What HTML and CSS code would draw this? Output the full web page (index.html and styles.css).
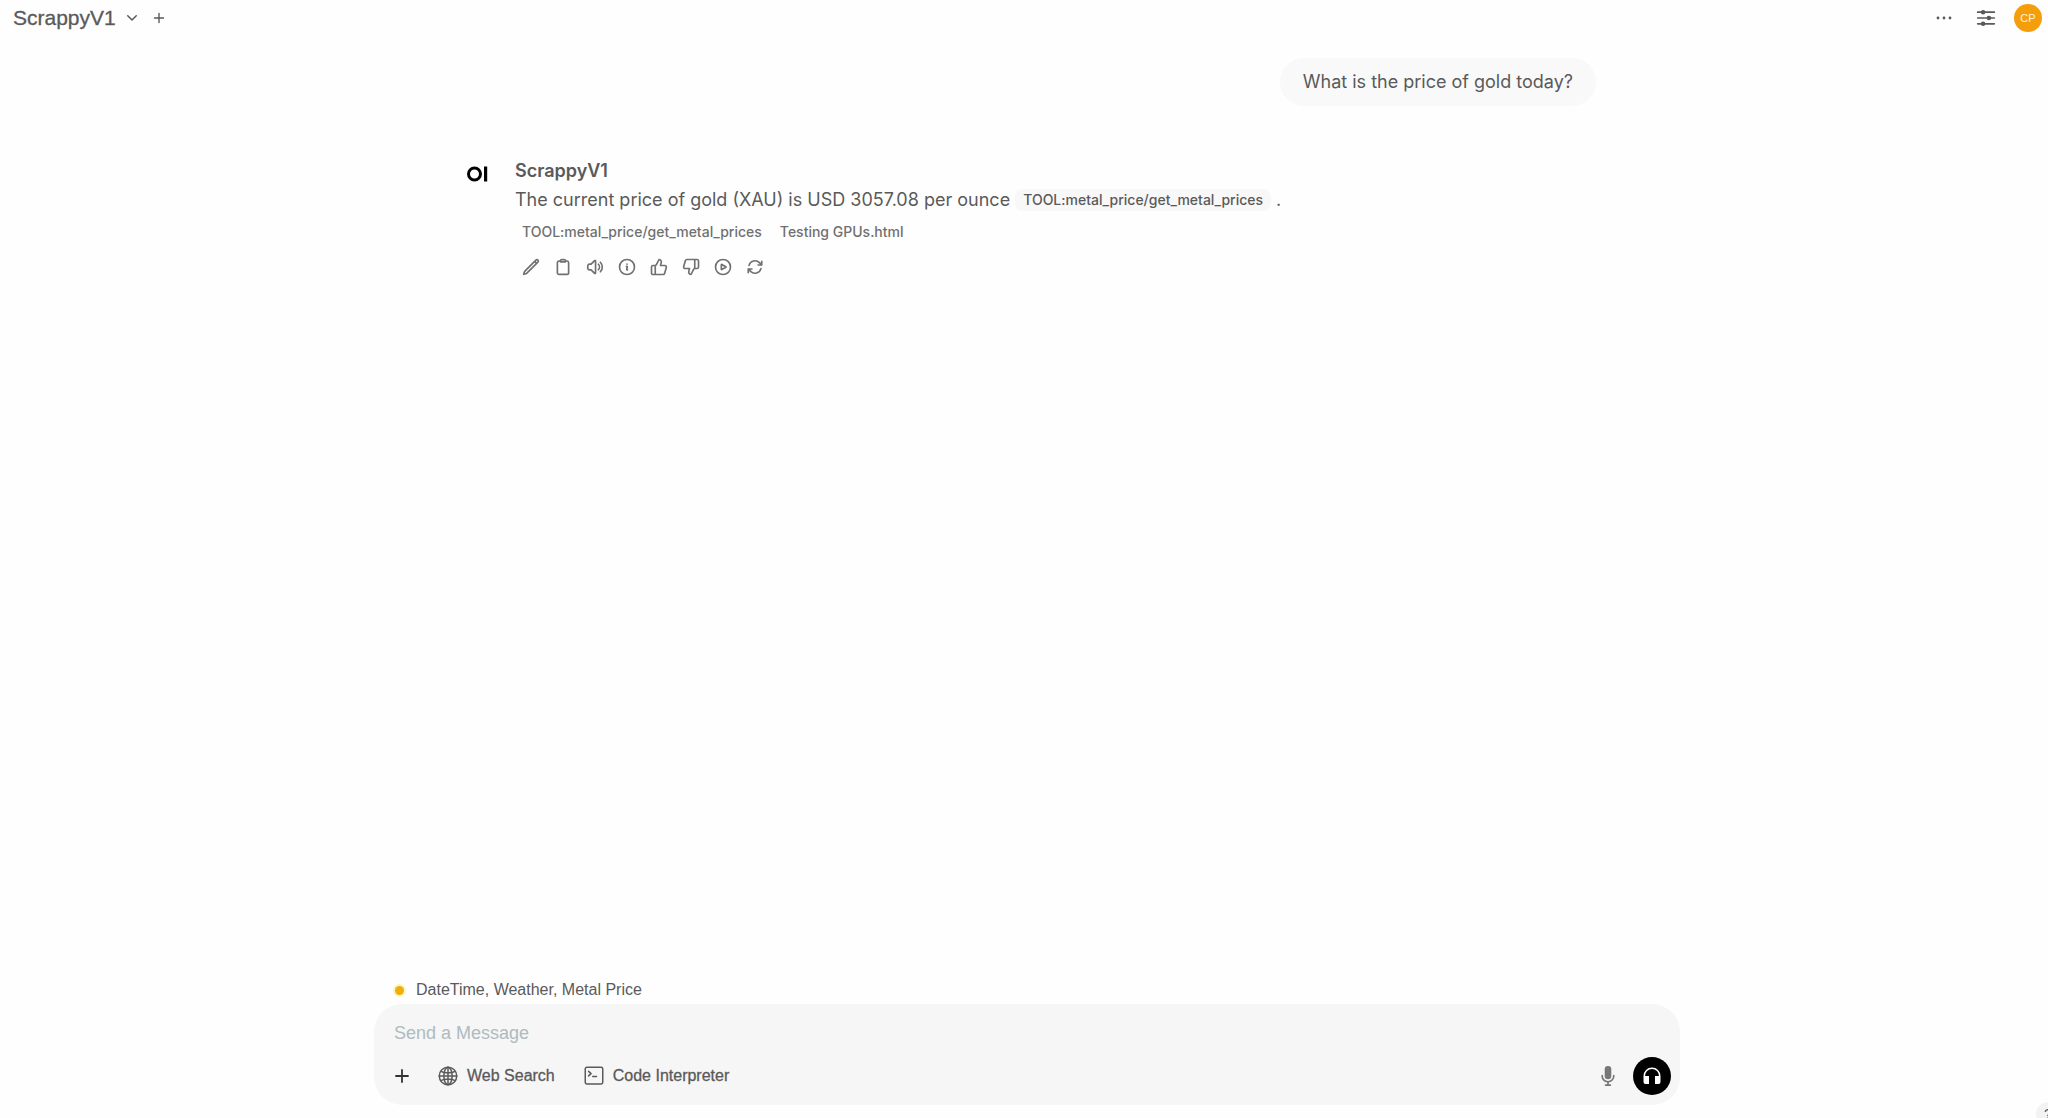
FILE: index.html
```html
<!DOCTYPE html>
<html lang="en">
<head>
    <meta charset="UTF-8">
    <meta name="viewport" content="width=device-width, initial-scale=1.0">
    <title>ScrappyV1</title>
    <link rel="stylesheet" href="styles.css">
</head>
<body>
    <header class="navbar">
        <button class="model-select" type="button">
            ScrappyV1
            <svg class="icon-xs" viewBox="0 0 24 24" stroke-width="3"><path d="m20.500 7.500-8.500 8.500-8.500-8.500"/></svg>
        </button>
        <button class="icon-btn" type="button" aria-label="Add model">
            <svg class="icon-xs" viewBox="0 0 24 24" stroke-width="2.8"><path d="M12 3v18M3 12h18"/></svg>
        </button>
        <div class="navbar-right">
            <button class="icon-btn more-btn" type="button" aria-label="More">
                <svg class="icon-md dots" viewBox="0 0 20 20"><circle cx="4" cy="10" r="1.4"/><circle cx="10" cy="10" r="1.4"/><circle cx="16" cy="10" r="1.4"/></svg>
            </button>
            <button class="icon-btn" type="button" aria-label="Controls">
                <svg class="icon-md" viewBox="0 0 24 24" stroke-width="2"><path d="M2 5h4.500M10.500 5H22M2 12h11.500M17.500 12H22M2 19h4.500M10.500 19H22"/><g fill="currentColor"><circle cx="8.500" cy="5" r="1.700"/><circle cx="15.500" cy="12" r="1.700"/><circle cx="8.500" cy="19" r="1.700"/></g></svg>
            </button>
            <button class="user-avatar" type="button">CP</button>
        </div>
    </header>

    <main class="chat">
        <div class="messages">
            <div class="user-message">What is the price of gold today?</div>

            <article class="reply">
                <div class="reply-avatar">
                    <svg viewBox="0 0 22 18"><circle cx="7.500" cy="9" r="6" fill="none" stroke="#000" stroke-width="3"/><path d="M17 1.500h3.200v15H17z"/></svg>
                </div>
                <div class="reply-body">
                    <h2>ScrappyV1</h2>
                    <p>The current price of gold (XAU) is USD 3057.08 per ounce <button class="source" type="button">TOOL:metal_price/get_metal_prices</button> .</p>
                    <div class="citations">
                        <button type="button">TOOL:metal_price/get_metal_prices</button>
                        <button type="button">Testing GPUs.html</button>
                    </div>
                    <div class="actions">
                        <button type="button" aria-label="Edit">
                            <svg viewBox="0 0 24 24"><path d="m16.862 4.487 1.687-1.688a1.875 1.875 0 1 1 2.652 2.652L6.832 19.82a4.5 4.5 0 0 1-1.897 1.13l-2.685.8.8-2.685a4.5 4.5 0 0 1 1.13-1.897L16.863 4.487Zm0 0L19.5 7.125"/></svg>
                        </button>
                        <button type="button" aria-label="Copy">
                            <svg viewBox="0 0 24 24"><path d="M15.666 3.888A2.25 2.25 0 0 0 13.5 2.25h-3c-1.03 0-1.9.693-2.166 1.638m7.332 0c.055.194.084.4.084.612a.75.75 0 0 1-.75.75H9a.75.75 0 0 1-.75-.75c0-.212.03-.418.084-.612m7.332 0c.646.049 1.288.11 1.927.184 1.1.128 1.907 1.077 1.907 2.185V19.5a2.25 2.25 0 0 1-2.25 2.25H6.75A2.25 2.25 0 0 1 4.5 19.5V6.257c0-1.108.806-2.057 1.907-2.185a48.208 48.208 0 0 1 1.927-.184"/></svg>
                        </button>
                        <button type="button" aria-label="Read aloud">
                            <svg viewBox="0 0 24 24"><path d="M19.114 5.636a9 9 0 0 1 0 12.728M16.463 8.288a5.25 5.25 0 0 1 0 7.424M6.75 8.25l4.72-4.72a.75.75 0 0 1 1.28.53v15.88a.75.75 0 0 1-1.28.53l-4.72-4.72H4.51c-.88 0-1.704-.507-1.938-1.354A9.009 9.009 0 0 1 2.25 12c0-.83.112-1.633.322-2.396C2.806 8.756 3.63 8.25 4.51 8.25H6.75Z"/></svg>
                        </button>
                        <button type="button" aria-label="Info">
                            <svg viewBox="0 0 24 24"><path d="m11.25 11.25.041-.02a.75.75 0 0 1 1.063.852l-.708 2.836a.75.75 0 0 0 1.063.853l.041-.021M22 12a10 10 0 1 1-20 0 10 10 0 0 1 20 0Zm-10-3.75h.008v.008H12V8.25Z"/></svg>
                        </button>
                        <button type="button" aria-label="Good response">
                            <svg viewBox="0 0 24 24"><path d="M7 10v12M15 5.88 14 10h5.83a2 2 0 0 1 1.92 2.56l-2.33 8A2 2 0 0 1 17.5 22H4a2 2 0 0 1-2-2v-8a2 2 0 0 1 2-2h2.76a2 2 0 0 0 1.79-1.11L12 2a3.13 3.13 0 0 1 3 3.88Z"/></svg>
                        </button>
                        <button type="button" aria-label="Bad response">
                            <svg viewBox="0 0 24 24"><path d="M17 14V2M9 18.12 10 14H4.17a2 2 0 0 1-1.92-2.56l2.33-8A2 2 0 0 1 6.5 2H20a2 2 0 0 1 2 2v8a2 2 0 0 1-2 2h-2.76a2 2 0 0 0-1.79 1.11L12 22a3.13 3.13 0 0 1-3-3.88Z"/></svg>
                        </button>
                        <button type="button" aria-label="Continue">
                            <svg viewBox="0 0 24 24"><circle cx="12" cy="12" r="10"/><path d="M15.91 11.672a.375.375 0 0 1 0 .656l-5.603 3.113a.375.375 0 0 1-.557-.328V8.887c0-.286.307-.466.557-.327l5.603 3.112Z"/></svg>
                        </button>
                        <button type="button" aria-label="Regenerate">
                            <svg viewBox="0 0 24 24"><path d="M16.023 9.348h4.992v-.001M2.985 19.644v-4.992m0 0h4.992m-4.993 0 3.181 3.183a8.25 8.25 0 0 0 13.803-3.7M4.031 9.865a8.25 8.25 0 0 1 13.803-3.7l3.181 3.182m0-4.991v4.99"/></svg>
                        </button>
                    </div>
                </div>
            </article>
        </div>

        <div class="composer-wrap">
            <div class="tools-status"><span class="status-dot"></span>DateTime, Weather, Metal Price</div>
            <form class="composer">
                <input type="text" placeholder="Send a Message" aria-label="Send a Message">
                <div class="composer-row">
                    <button class="add-btn" type="button" aria-label="More options">
                        <svg class="icon-md" viewBox="0 0 20 20" stroke-width="1.8"><path d="M10 4v12M4 10h12"/></svg>
                    </button>
                    <button class="feature" type="button">
                        <svg class="icon-md" viewBox="0 0 24 24" stroke-width="1.8"><circle cx="12" cy="12" r="10.500"/><ellipse cx="12" cy="12" rx="5" ry="10.500"/><path d="M3.500 6.500c4 2.500 13 2.500 17 0M3.500 17.500c4-2.500 13-2.500 17 0M1.500 12h21M12 1.500v21"/></svg>
                        Web Search
                    </button>
                    <button class="feature" type="button">
                        <svg class="icon-md" viewBox="0 0 24 24" stroke-width="1.8"><rect x="1.500" y="1.500" width="21" height="20" rx="2"/><path d="m5.500 6.500 3 2.700-3 2.700M10.500 12.500h4.500"/></svg>
                        Code Interpreter
                    </button>
                    <div class="composer-right">
                        <button class="icon-btn" type="button" aria-label="Record voice">
                            <svg class="icon-mic" viewBox="0 0 20 20"><path d="M7 4a3 3 0 0 1 6 0v6a3 3 0 1 1-6 0V4Z"/><path d="M5.500 9.643a.75.75 0 0 0-1.500 0V10c0 3.060 2.290 5.585 5.250 5.954V17.500h-1.500a.75.75 0 0 0 0 1.500h4.500a.75.75 0 0 0 0-1.500h-1.500v-1.546A6.001 6.001 0 0 0 16 10v-.357a.75.75 0 0 0-1.500 0V10a4.500 4.500 0 0 1-9 0v-.357Z"/></svg>
                        </button>
                        <button class="call-btn" type="button" aria-label="Call">
                            <svg viewBox="0 0 20 20"><path d="M1.500 10a8.500 8.500 0 0 1 17 0v6a2 2 0 0 1-2 2h-3.500v-8h4a7 7 0 0 0-14 0h4v8h-3.500a2 2 0 0 1-2-2Z"/></svg>
                        </button>
                    </div>
                </div>
            </form>
        </div>
    </main>

    <button class="help-btn" type="button" aria-label="Help">?</button>
</body>
</html>
```

FILE: styles.css
```css
* {
    box-sizing: border-box;
}
body {
    margin: 0;
    min-height: 100vh;
    display: flex;
    flex-direction: column;
    overflow: hidden;
    background: #fefefe;
    color: #5a5a5a;
    font-family: "Liberation Sans", Arial, sans-serif;
    font-size: 16px;
}
button {
    padding: 0;
    border: none;
    background: none;
    color: inherit;
    font: inherit;
    cursor: pointer;
}
svg {
    display: block;
    fill: none;
    stroke: currentColor;
    stroke-linecap: round;
    stroke-linejoin: round;
}

/* navbar */
.navbar {
    display: flex;
    align-items: center;
    gap: 15px;
    height: 36px;
    padding: 0 6px 0 13px;
}
.model-select {
    display: flex;
    align-items: center;
    gap: 10px;
    font-size: 21px;
    -webkit-text-stroke: 0.3px;
}
.navbar-right {
    display: flex;
    align-items: center;
    gap: 18px;
    margin-left: auto;
}
.more-btn {
    margin-right: 4px;
}
.icon-xs {
    width: 12px;
    height: 12px;
}
.icon-md {
    width: 20px;
    height: 20px;
}
.dots {
    fill: currentColor;
    stroke: none;
}
.user-avatar {
    width: 28px;
    height: 28px;
    border-radius: 50%;
    background: #f59e0b;
    color: #fff3d6;
    font-size: 11px;
}

/* messages */
.chat {
    flex: 1;
    display: flex;
    flex-direction: column;
    padding: 22px 8px 13px 14px;
    font-family: Inter, sans-serif;
    font-optical-sizing: none;
}
.messages {
    flex: 1;
    display: flex;
    flex-direction: column;
    width: 100%;
    max-width: 1138px;
    margin: 0 auto;
}
.user-message {
    align-self: flex-end;
    padding: 10px 23px;
    border-radius: 24px;
    background: #f9f9f9;
    font-size: 18px;
    line-height: 28px;
}
.reply {
    display: flex;
    gap: 26px;
    margin-top: 51px;
    padding-left: 9px;
}
.reply-avatar {
    width: 22px;
    padding-top: 8px;
}
.reply-avatar svg {
    fill: #000;
    stroke: none;
}
.reply h2 {
    margin: 0;
    font-size: 18px;
    font-weight: 600;
    line-height: 28px;
}
.reply p {
    margin: 0;
    font-size: 18px;
    line-height: 30px;
}
.source {
    padding: 0 8px;
    border-radius: 8px;
    background: #f8f8f8;
    font-size: 14px;
    font-weight: 500;
    line-height: 22px;
    vertical-align: 1px;
}
.citations {
    display: flex;
    gap: 18px;
    padding: 7px 7px 6px;
    color: #707070;
    font-size: 14px;
    font-weight: 500;
    line-height: 20px;
}
.actions {
    display: flex;
    gap: 14px;
    padding: 10px 7px;
    color: #707070;
}
.actions svg {
    width: 18px;
    height: 18px;
    stroke-width: 2.2;
}

/* composer */
.composer-wrap {
    width: 100%;
    max-width: 1306px;
    margin: 0 auto;
    font-family: "Liberation Sans", Arial, sans-serif;
}
.tools-status {
    display: flex;
    align-items: center;
    gap: 12px;
    padding: 0 21px 4px;
    line-height: 20px;
}
.status-dot {
    width: 9px;
    height: 9px;
    border-radius: 50%;
    background: #eeb008;
    box-shadow: 0 0 0 2px #fdf3c4;
}
.composer {
    padding: 14px 9px 10px 20px;
    border-radius: 28px;
    background: #f6f6f6;
}
.composer input {
    display: block;
    width: 100%;
    height: 30px;
    padding: 0;
    border: none;
    outline: none;
    background: none;
    font: inherit;
    font-size: 18px;
}
.composer input::placeholder {
    color: #afbbbe;
}
.composer-row {
    display: flex;
    align-items: center;
    gap: 29px;
    margin-top: 9px;
}
.add-btn {
    margin: 0 -3px 0 -2px;
    color: #333;
}
.feature {
    display: flex;
    align-items: center;
    gap: 9px;
    -webkit-text-stroke: 0.3px;
}
.composer-right {
    display: flex;
    align-items: center;
    gap: 14px;
    margin-left: auto;
}
.icon-mic {
    width: 22px;
    height: 22px;
    fill: #777;
    stroke: none;
}
.call-btn {
    display: flex;
    align-items: center;
    justify-content: center;
    width: 38px;
    height: 38px;
    border-radius: 50%;
    background: #000;
    color: #fff;
}
.call-btn svg {
    width: 20px;
    height: 20px;
    fill: currentColor;
    stroke: none;
}

.help-btn {
    position: fixed;
    right: -12px;
    bottom: -8px;
    width: 24px;
    height: 24px;
    border-radius: 50%;
    background: #f3f3f3;
    font-size: 14px;
}
```
